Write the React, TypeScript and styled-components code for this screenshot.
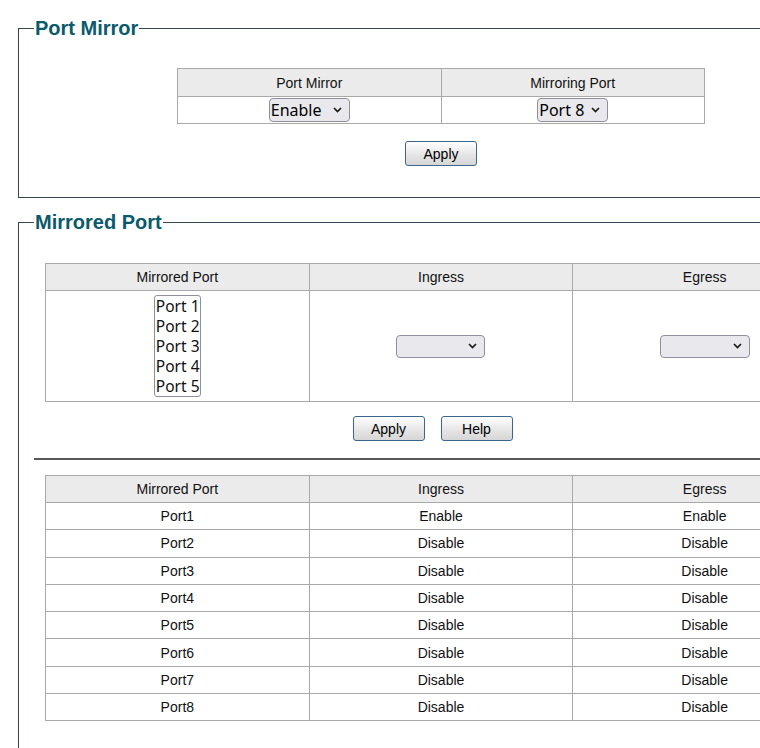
import styled, { createGlobalStyle } from 'styled-components';

const GlobalStyle = createGlobalStyle`
  html, body {
    margin: 0;
    overflow-x: hidden;
    background: #fff;
  }
  body {
    font-family: "Liberation Sans", Arial, sans-serif;
    font-size: 14px;
    color: #000;
  }
`;

const Page = styled.div`
  padding: 17px 0 0 18px;
  width: 846px;
`;

const Panel = styled.fieldset<{ $bottom?: number }>`
  box-sizing: border-box;
  width: 846px;
  min-width: 0;
  margin: 0 0 13px;
  padding: 0 26px ${(p) => p.$bottom ?? 0}px;
  border: 1px solid #34474f;
`;

const Legend = styled.legend`
  margin-left: -11px;
  padding: 0 1px;
  font-family: "Liberation Sans", Arial, sans-serif;
  font-size: 20px;
  font-weight: bold;
  line-height: 23px;
  color: #0b5a6c;
`;

const PanelBody = styled.div<{ $top: number }>`
  display: flex;
  flex-direction: column;
  align-items: center;
  padding-top: ${(p) => p.$top}px;
`;

const Grid = styled.table<{ $width: number }>`
  width: ${(p) => p.$width}px;
  border-collapse: collapse;
  table-layout: fixed;
`;

const HeadCell = styled.th<{ $height?: number }>`
  height: ${(p) => p.$height ?? 27}px;
  padding: 0;
  border: 1px solid #a9a9a9;
  background: #ebebeb;
  font-weight: normal;
  text-align: center;
  color: #111;
`;

const Cell = styled.td<{ $height?: number }>`
  height: ${(p) => p.$height ?? 26}px;
  padding: 0;
  border: 1px solid #a9a9a9;
  text-align: center;
  vertical-align: middle;
  color: #111;
`;

const Actions = styled.div<{ $top: number; $shift?: number }>`
  display: flex;
  gap: 16px;
  margin-top: ${(p) => p.$top}px;
  margin-right: ${(p) => p.$shift ?? 0}px;
`;

const Button = styled.button`
  width: 72px;
  height: 25px;
  padding: 0;
  border: 1px solid #3b6690;
  border-radius: 3px;
  background: linear-gradient(#ffffff, #e4e4e4 60%, #d6d6d6);
  font-family: "Liberation Sans", Arial, sans-serif;
  font-size: 14px;
  color: #000;
`;

const SelectWrap = styled.span`
  position: relative;
  display: inline-block;
  vertical-align: middle;
`;

const Select = styled.select<{ $width: number; $height?: number }>`
  appearance: none;
  box-sizing: border-box;
  display: block;
  width: ${(p) => p.$width}px;
  height: ${(p) => p.$height ?? 24}px;
  padding: 0 18px 0 1px;
  border: 1px solid #8f8f9d;
  border-radius: 4px;
  background: #e9e9ed;
  font-family: "Noto Sans", "DejaVu Sans", sans-serif;
  font-size: 16px;
  line-height: 20px;
  color: #000;
`;

const Chevron = styled.svg`
  position: absolute;
  right: 8px;
  top: 50%;
  margin-top: -3px;
  pointer-events: none;
`;

const ListBox = styled.div`
  box-sizing: border-box;
  display: inline-block;
  vertical-align: middle;
  width: 47px;
  height: 102px;
  border: 1px solid #8f8f9d;
  border-radius: 3px;
  text-align: left;
  font-family: "Noto Sans", "DejaVu Sans", sans-serif;
  font-size: 15.5px;
  line-height: 20px;
`;

const Option = styled.div`
  padding: 0 1px;
  white-space: nowrap;
`;

const Rule = styled.hr`
  align-self: stretch;
  margin: 17px -11px 15px;
  border: 0;
  border-top: 2px solid #585858;
`;

const Spacer = styled.div`
  height: 40px;
`;

const Dropdown = ({
  width,
  height,
  options,
}: {
  width: number;
  height?: number;
  options: string[];
}) => (
  <SelectWrap>
    <Select $width={width} $height={height} defaultValue={options[0]}>
      {options.map((o) => (
        <option key={o}>{o}</option>
      ))}
    </Select>
    <Chevron width="9" height="6" viewBox="0 0 9 6">
      <polyline
        points="1,1 4.5,4.5 8,1"
        fill="none"
        stroke="#1a1a1a"
        strokeWidth="1.7"
      />
    </Chevron>
  </SelectWrap>
);

const ports = [1, 2, 3, 4, 5, 6, 7, 8];

const mirrored = ports.map((n) => ({
  port: `Port${n}`,
  ingress: n === 1 ? 'Enable' : 'Disable',
  egress: n === 1 ? 'Enable' : 'Disable',
}));

const App = () => (
  <>
    <GlobalStyle />
    <Page>
      <Panel $bottom={31}>
        <Legend>Port Mirror</Legend>
        <PanelBody $top={28}>
          <Grid $width={528}>
            <thead>
              <tr>
                <HeadCell>Port Mirror</HeadCell>
                <HeadCell>Mirroring Port</HeadCell>
              </tr>
            </thead>
            <tbody>
              <tr>
                <Cell>
                  <Dropdown width={81} options={['Enable', 'Disable']} />
                </Cell>
                <Cell>
                  <Dropdown
                    width={71}
                    options={['Port 8', ...ports.slice(0, 7).map((n) => `Port ${n}`)]}
                  />
                </Cell>
              </tr>
            </tbody>
          </Grid>
          <Actions $top={17}>
            <Button>Apply</Button>
          </Actions>
        </PanelBody>
      </Panel>

      <Panel>
        <Legend>Mirrored Port</Legend>
        <PanelBody $top={29}>
          <Grid $width={792}>
            <thead>
              <tr>
                <HeadCell $height={26}>Mirrored Port</HeadCell>
                <HeadCell $height={26}>Ingress</HeadCell>
                <HeadCell $height={26}>Egress</HeadCell>
              </tr>
            </thead>
            <tbody>
              <tr>
                <Cell $height={110}>
                  <ListBox role="listbox">
                    {ports.slice(0, 5).map((n) => (
                      <Option key={n} role="option">
                        Port {n}
                      </Option>
                    ))}
                  </ListBox>
                </Cell>
                <Cell $height={110}>
                  <Dropdown width={89} height={23} options={['', 'Enable', 'Disable']} />
                </Cell>
                <Cell $height={110}>
                  <Dropdown width={90} height={23} options={['', 'Enable', 'Disable']} />
                </Cell>
              </tr>
            </tbody>
          </Grid>
          <Actions $top={14} $shift={17}>
            <Button>Apply</Button>
            <Button>Help</Button>
          </Actions>
          <Rule />
          <Grid $width={792}>
            <thead>
              <tr>
                <HeadCell $height={26}>Mirrored Port</HeadCell>
                <HeadCell $height={26}>Ingress</HeadCell>
                <HeadCell $height={26}>Egress</HeadCell>
              </tr>
            </thead>
            <tbody>
              {mirrored.map((row) => (
                <tr key={row.port}>
                  <Cell $height={26.3}>{row.port}</Cell>
                  <Cell $height={26.3}>{row.ingress}</Cell>
                  <Cell $height={26.3}>{row.egress}</Cell>
                </tr>
              ))}
            </tbody>
          </Grid>
          <Spacer />
        </PanelBody>
      </Panel>
    </Page>
  </>
);

export default App;
